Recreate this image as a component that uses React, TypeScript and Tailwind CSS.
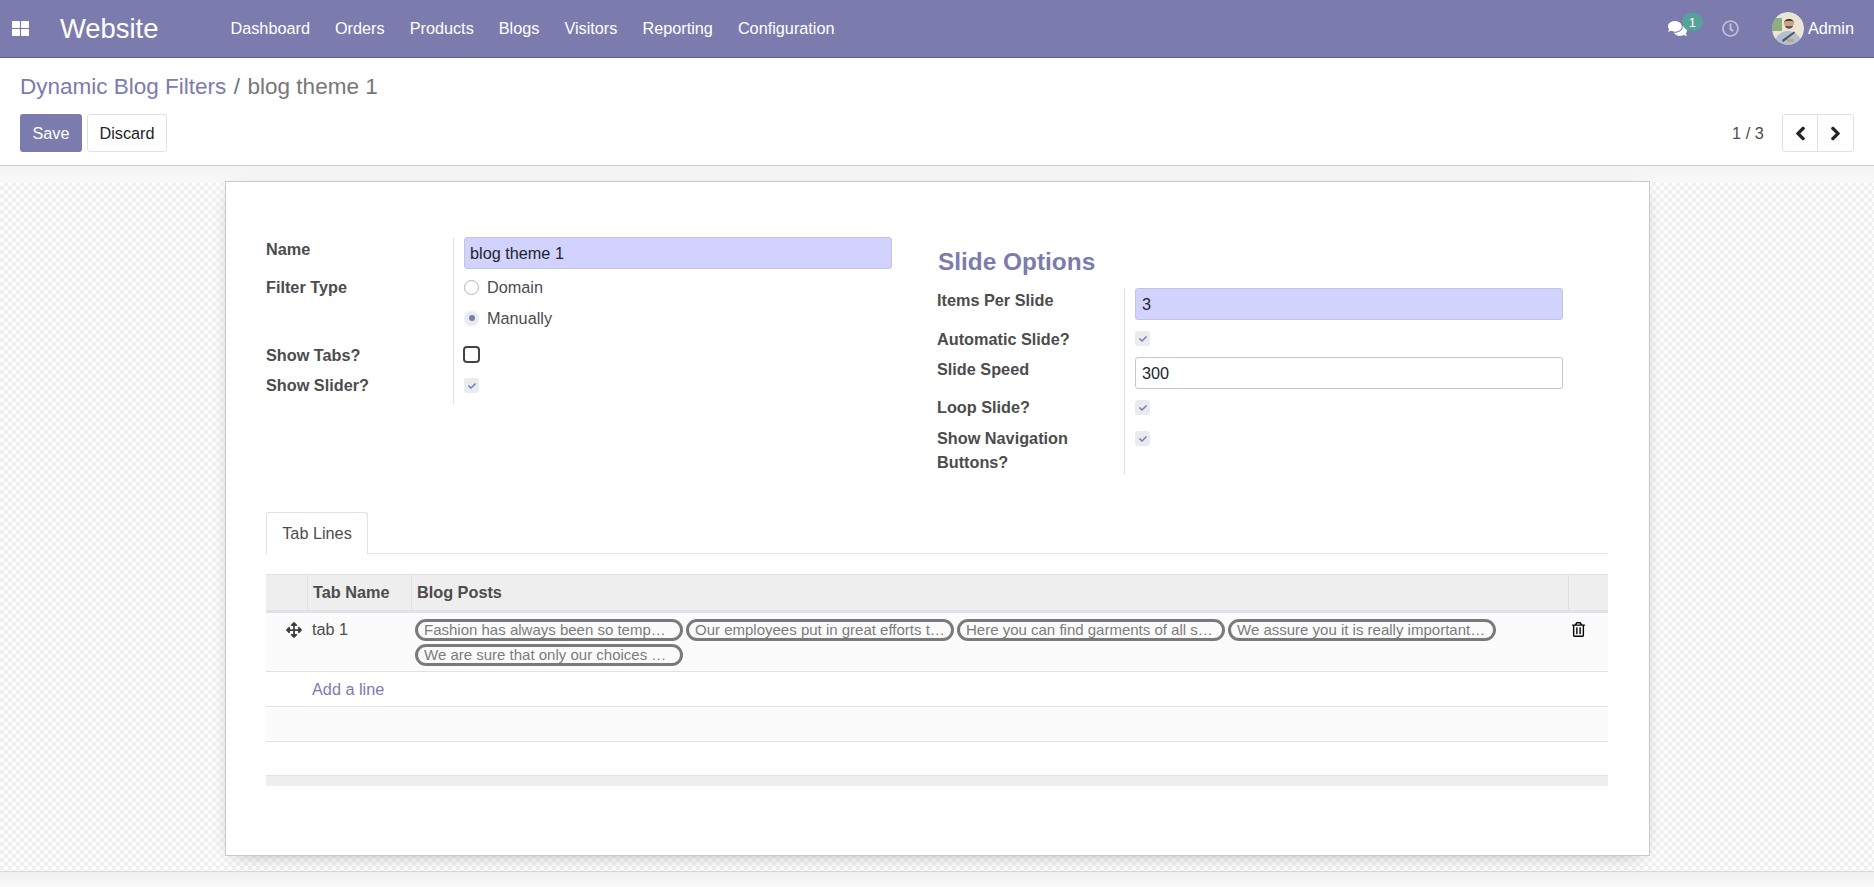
import React from 'react';
import {
  FaArrowsAlt,
  FaCheck,
  FaChevronLeft,
  FaChevronRight,
  FaComments,
  FaRegClock,
  FaRegTrashAlt,
  FaThLarge,
} from 'react-icons/fa';

const navItems = ['Dashboard', 'Orders', 'Products', 'Blogs', 'Visitors', 'Reporting', 'Configuration'];

const tags = [
  'Fashion has always been so temp…',
  'Our employees put in great efforts t…',
  'Here you can find garments of all s…',
  'We assure you it is really important…',
  'We are sure that only our choices …',
];

const Avatar = () => (
  <svg width="32" height="33" viewBox="0 0 32 33" className="rounded-full blur-[0.4px]">
    <rect width="32" height="33" fill="#ece4d4" />
    <rect x="0" y="5" width="10" height="14" fill="#8fae7e" />
    <rect x="2" y="0" width="9" height="6" fill="#dfe8df" />
    <path d="M2 33 C3 24 9 19 16 19 C23 19 29 24 30 33 Z" fill="#b0c2d0" />
    <circle cx="17" cy="11.5" r="4.8" fill="#c9a287" />
    <path d="M12.2 11 C12 5.5 22 5.5 21.8 11 L20.5 9 L13.5 9 Z" fill="#4a3a30" />
    <path d="M13 14 C14 17.5 20 17.5 21 14 L20 14 L14 14 Z" fill="#6b5244" />
    <path d="M10 28 L22 19.5 L23.2 20.8 L11.2 30 Z" fill="#4b5360" />
    <rect x="15" y="27" width="7" height="3" fill="#c9a287" />
  </svg>
);

const Checked = () => (
  <span className="flex h-[15px] w-[15px] items-center justify-center rounded-[3px] bg-[#e9ecef] text-[#7c7bad]">
    <FaCheck className="h-[8px] w-[8px]" />
  </span>
);

const Label = ({ children }: { children: React.ReactNode }) => (
  <div className="font-bold leading-6 text-[#4c4c4c]">{children}</div>
);

const FieldInput = ({ value, required, inset }: { value: string; required?: boolean; inset?: string }) => (
  <div
    className={`flex h-[32px] items-center rounded-[3px] border text-[#212529] ${inset ?? 'px-[5px]'} ${
      required ? 'border-[#c4c4dc] bg-[#d2d2ff]' : 'border-[#c6c6c6] bg-white'
    }`}
  >
    {value}
  </div>
);

const Row = ({ height, label, children }: { height: string; label: React.ReactNode; children: React.ReactNode }) => (
  <div className={`flex ${height}`}>
    <div className="w-[187px] shrink-0">
      <Label>{label}</Label>
    </div>
    <div className="w-[439px] border-l border-[#dee2e6] pl-[10px]">{children}</div>
  </div>
);

const Radio = ({ checked, label }: { checked?: boolean; label: string }) => (
  <div className="flex h-6 items-center gap-[8px] text-[#4c4c4c]">
    {checked ? (
      <span className="flex h-[15px] w-[15px] items-center justify-center rounded-full bg-[#e9ecef]">
        <span className="h-[6px] w-[6px] rounded-full bg-[#7c7bad]" />
      </span>
    ) : (
      <span className="h-[15px] w-[15px] rounded-full border border-[#adb5bd] bg-white" />
    )}
    {label}
  </div>
);

const Tag = ({ text }: { text: string }) => (
  <span className="h-[22px] w-[268px] truncate rounded-full border-[3px] border-[#7a7a7a] pl-[6px] pr-[5px] text-[15px] leading-[16px] text-[#7b7b7b]">
    {text}
  </span>
);

export default function App() {
  return (
    <div className="flex h-[887px] flex-col overflow-hidden bg-white text-[16.25px] [font-family:'Liberation_Sans',sans-serif]">
      <header className="flex h-[58px] shrink-0 items-center border-b border-[#5f5e97] bg-[#7c7bad] pr-[20px] text-white">
        <FaThLarge className="ml-[12px] h-[17px] w-[17px]" />
        <span className="ml-[31px] text-[27.4px] font-light leading-none">Website</span>
        <nav className="ml-[72px] flex gap-[25px]">
          {navItems.map((item) => (
            <a key={item}>{item}</a>
          ))}
        </nav>
        <div className="ml-auto flex items-center">
          <div className="relative">
            <FaComments className="h-[19px] w-[19px]" />
            <span className="absolute left-[14px] top-[-6px] flex h-[18px] w-[21px] items-center justify-center rounded-full bg-[#57a297] text-[13px] leading-none">
              1
            </span>
          </div>
          <FaRegClock className="ml-[35px] h-[17px] w-[17px] text-[#c4c3dc]" />
          <div className="ml-[33px] flex h-[33px] w-[32px] overflow-hidden rounded-full">
            <Avatar />
          </div>
          <span className="ml-[4px]">Admin</span>
        </div>
      </header>

      <div className="flex h-[108px] shrink-0 flex-col border-b border-[#cccccc] px-[20px] pt-[16px]">
        <div className="flex h-[26px] items-center gap-[7.5px] text-[22.5px] leading-none">
          <a className="text-[#7c7bad]">Dynamic Blog Filters</a>
          <span className="text-[#6c757d]">/</span>
          <span className="text-[#777777]">blog theme 1</span>
        </div>
        <div className="mt-[14px] flex items-center">
          <button className="h-[38px] w-[62px] rounded-[3px] bg-[#7c7bad] pt-px text-white">Save</button>
          <button className="ml-[5px] h-[38px] w-[80px] rounded-[3px] border border-[#dee2e6] bg-white pt-px text-[#212529]">
            Discard
          </button>
          <span className="ml-auto tracking-[0.1px] text-[#4c4c4c]">1 / 3</span>
          <div className="ml-[18px] flex h-[38px] w-[72px] rounded-[3px] border border-[#dee2e6] text-[#212529]">
            <button className="flex w-[35px] items-center justify-center border-r border-[#dee2e6]">
              <FaChevronLeft className="h-[15px] w-[15px]" stroke="currentColor" strokeWidth={36} />
            </button>
            <button className="flex flex-1 items-center justify-center">
              <FaChevronRight className="h-[15px] w-[15px]" stroke="currentColor" strokeWidth={36} />
            </button>
          </div>
        </div>
      </div>

      <main className="relative h-[706px] shrink-0 border-b border-[#d9d9d9] bg-[repeating-conic-gradient(#f1f1f1_0_25%,#fdfdfd_0_50%)] bg-[length:8px_8px] pl-[225px] pt-[15px]">
        <div className="absolute inset-x-0 top-0 h-[15px] bg-gradient-to-b from-[#f3f3f3] to-[#f8f8f8]" />
        <div className="relative h-[675px] w-[1425px] border border-[#c8c8d4] bg-white pl-[40px] pr-[41px] pt-[55px] shadow-[0_5px_20px_-10px_#00000066]">
          <div className="flex">
            <div className="w-[671px]">
              <Row height="h-[38px]" label="Name">
                <FieldInput value="blog theme 1" required />
              </Row>
              <Row height="h-[68px]" label="Filter Type">
                <Radio label="Domain" />
                <div className="mt-[7px]">
                  <Radio checked label="Manually" />
                </div>
              </Row>
              <Row height="h-[30px]" label="Show Tabs?">
                <span className="ml-[-1px] mt-[3px] block h-[17px] w-[17px] rounded-[4px] border-2 border-[#444444]" />
              </Row>
              <Row height="h-[31px]" label="Show Slider?">
                <div className="pt-[5px]">
                  <Checked />
                </div>
              </Row>
            </div>
            <div>
              <h2 className="h-[51px] pl-[1px] text-[24.4px] font-bold leading-[50px] text-[#7c7bad]">Slide Options</h2>
              <Row height="h-[39px]" label="Items Per Slide">
                <FieldInput value="3" required inset="px-[6px]" />
              </Row>
              <Row height="h-[30px]" label="Automatic Slide?">
                <div className="pt-[4px]">
                  <Checked />
                </div>
              </Row>
              <Row height="h-[38px]" label="Slide Speed">
                <FieldInput value="300" inset="px-[6px]" />
              </Row>
              <Row height="h-[31px]" label="Loop Slide?">
                <div className="pt-[5px]">
                  <Checked />
                </div>
              </Row>
              <Row
                height="h-[49px]"
                label={
                  <>
                    Show Navigation
                    <br />
                    Buttons?
                  </>
                }
              >
                <div className="pt-[5px]">
                  <Checked />
                </div>
              </Row>
            </div>
          </div>

          <div className="mt-[37px] flex h-[42px] border-b border-[#dee2e6]">
            <div className="z-10 h-[42px] w-[102px] rounded-t-[3px] border border-b-0 border-[#dee2e6] bg-white pt-[8px] text-center text-[#4c4c4c]">
              Tab Lines
            </div>
          </div>

          <div className="mt-[20px]">
            <div className="flex h-[39px] border-b-[3px] border-t border-[#dee2e6] bg-[#eeeeee] font-bold leading-[34px] text-[#4c4c4c]">
              <div className="w-[42px] border-r border-[#e0e0e0]" />
              <div className="w-[104px] border-r border-[#e0e0e0] pl-[5px]">Tab Name</div>
              <div className="flex-1 border-r border-[#e0e0e0] pl-[5px]">Blog Posts</div>
              <div className="w-[39px]" />
            </div>
            <div className="flex h-[59px] border-b border-[#dee2e6] bg-[#fbfbfb] text-[#4c4c4c]">
              <div className="flex w-[42px] justify-end pr-[6px] pt-[9px]">
                <FaArrowsAlt className="h-[16px] w-[16px] text-[#3f3f3f]" />
              </div>
              <div className="w-[104px] pl-[4px] pt-[4px] leading-6">tab 1</div>
              <div className="flex flex-1 flex-wrap content-start gap-x-[3px] gap-y-[3px] pl-[3px] pt-[6px]">
                {tags.map((t) => (
                  <Tag key={t} text={t} />
                ))}
              </div>
              <div className="flex w-[39px] pl-[3px] pt-[9px]">
                <FaRegTrashAlt className="h-[15px] w-[13px] text-black" />
              </div>
            </div>
            <div className="flex h-[35px] items-center border-b border-[#e2e2ea] pl-[46px] text-[#7c7bad]">Add a line</div>
            <div className="h-[35px] border-b border-[#e2e2ea] bg-[#fbfbfb]" />
            <div className="h-[33px]" />
            <div className="h-[11px] border-t border-[#e2e2e2] bg-[#eeeeee]" />
          </div>
        </div>
      </main>
      <div className="flex-1 bg-gradient-to-b from-[#f0f0f0] to-[#f9f9f9]" />
    </div>
  );
}
